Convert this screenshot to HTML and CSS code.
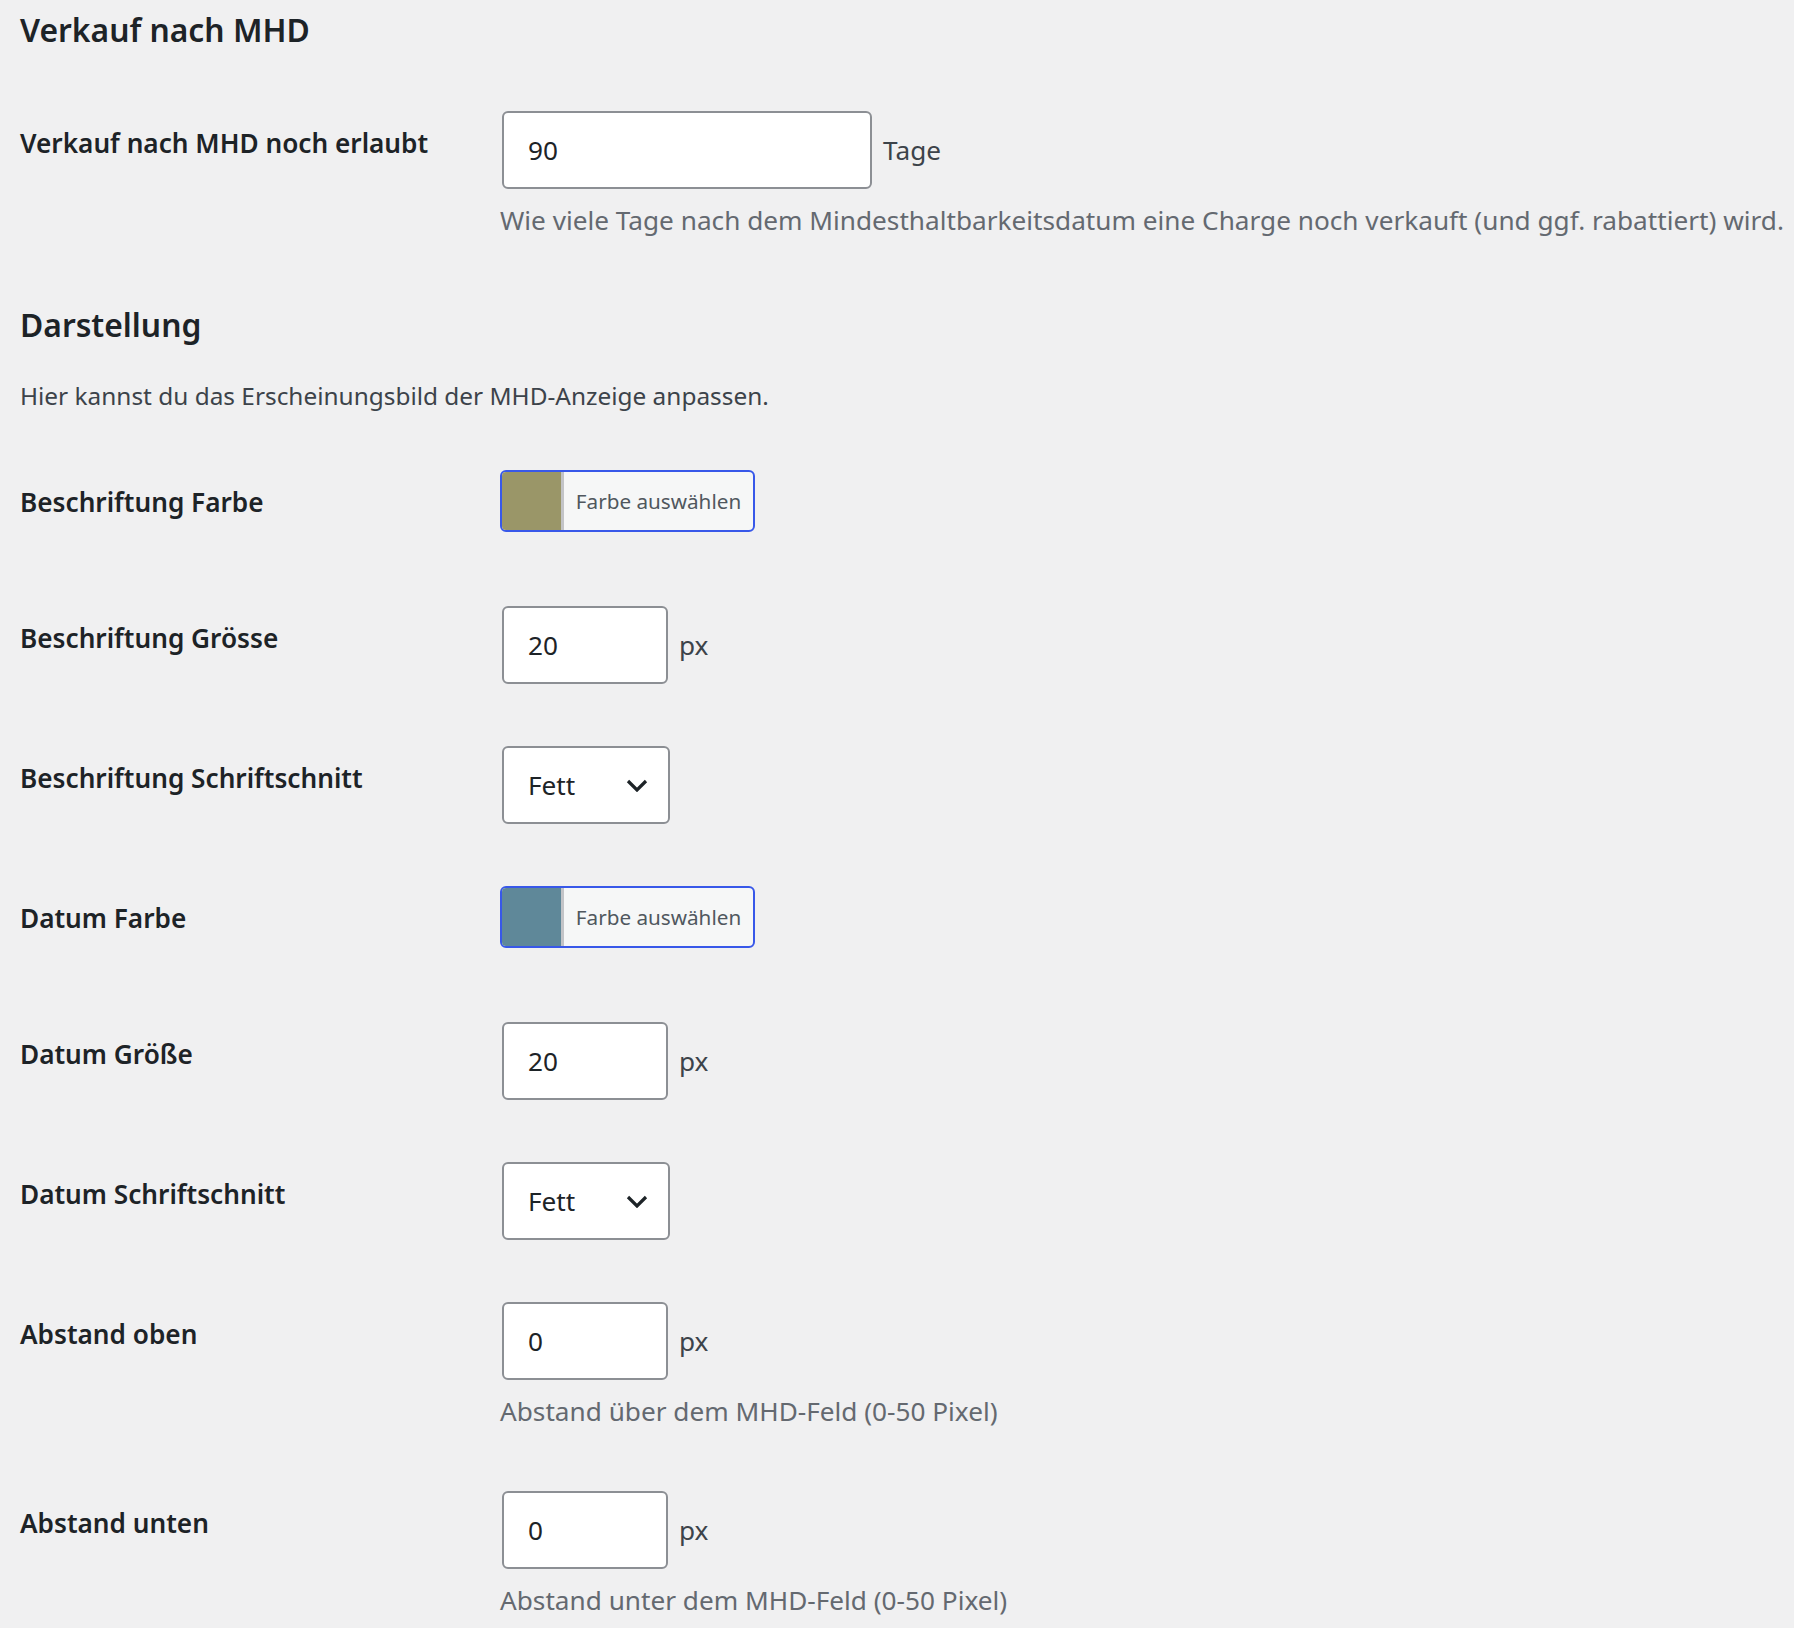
FILE: index.html
```html
<!DOCTYPE html>
<html lang="de">
<head>
    <meta charset="UTF-8">
    <meta name="viewport" content="width=device-width, initial-scale=1.0">
    <title>MHD Einstellungen</title>
    <link rel="stylesheet" href="styles.css">
</head>
<body>
    <div class="wrap">
        <h2>Verkauf nach MHD</h2>

        <div class="form-row">
            <div class="row-label">Verkauf nach MHD noch erlaubt</div>
            <div class="row-field">
                <div class="field-line">
                    <input type="number" class="input-wide" value="90">
                    <span class="unit">Tage</span>
                </div>
                <p class="description">Wie viele Tage nach dem Mindesthaltbarkeitsdatum eine Charge noch verkauft (und ggf. rabattiert) wird.</p>
            </div>
        </div>

        <h2>Darstellung</h2>
        <p class="intro">Hier kannst du das Erscheinungsbild der MHD-Anzeige anpassen.</p>

        <div class="form-row">
            <div class="row-label">Beschriftung Farbe</div>
            <div class="row-field">
                <button type="button" class="color-result">
                    <span class="swatch swatch-olive"></span>
                    <span class="color-text">Farbe auswählen</span>
                </button>
            </div>
        </div>

        <div class="form-row">
            <div class="row-label">Beschriftung Grösse</div>
            <div class="row-field">
                <div class="field-line">
                    <input type="number" class="input-small" value="20">
                    <span class="unit">px</span>
                </div>
            </div>
        </div>

        <div class="form-row">
            <div class="row-label">Beschriftung Schriftschnitt</div>
            <div class="row-field">
                <div class="field-line">
                    <div class="select-wrap">
                        <select>
                            <option>Fett</option>
                            <option>Normal</option>
                        </select>
                        <svg class="chevron" viewBox="0 0 22 13" width="22" height="13"><path d="M2 2l9 9 9-9" fill="none" stroke="#1d2327" stroke-width="3.2"/></svg>
                    </div>
                </div>
            </div>
        </div>

        <div class="form-row">
            <div class="row-label">Datum Farbe</div>
            <div class="row-field">
                <button type="button" class="color-result">
                    <span class="swatch swatch-teal"></span>
                    <span class="color-text">Farbe auswählen</span>
                </button>
            </div>
        </div>

        <div class="form-row">
            <div class="row-label">Datum Größe</div>
            <div class="row-field">
                <div class="field-line">
                    <input type="number" class="input-small" value="20">
                    <span class="unit">px</span>
                </div>
            </div>
        </div>

        <div class="form-row">
            <div class="row-label">Datum Schriftschnitt</div>
            <div class="row-field">
                <div class="field-line">
                    <div class="select-wrap">
                        <select>
                            <option>Fett</option>
                            <option>Normal</option>
                        </select>
                        <svg class="chevron" viewBox="0 0 22 13" width="22" height="13"><path d="M2 2l9 9 9-9" fill="none" stroke="#1d2327" stroke-width="3.2"/></svg>
                    </div>
                </div>
            </div>
        </div>

        <div class="form-row">
            <div class="row-label">Abstand oben</div>
            <div class="row-field">
                <div class="field-line">
                    <input type="number" class="input-small" value="0">
                    <span class="unit">px</span>
                </div>
                <p class="description">Abstand über dem MHD-Feld (0-50 Pixel)</p>
            </div>
        </div>

        <div class="form-row">
            <div class="row-label">Abstand unten</div>
            <div class="row-field">
                <div class="field-line">
                    <input type="number" class="input-small" value="0">
                    <span class="unit">px</span>
                </div>
                <p class="description">Abstand unter dem MHD-Feld (0-50 Pixel)</p>
            </div>
        </div>
    </div>
</body>
</html>
```

FILE: styles.css
```css
* {
    margin: 0;
    padding: 0;
    box-sizing: border-box;
}

body {
    background: #f0f0f1;
    color: #3c434a;
    font-family: 'Noto Sans', 'Open Sans', sans-serif;
    font-size: 24.4px;
}

.wrap {
    padding: 6px 0 0 20px;
}

h2 {
    font-size: 31.8px;
    font-weight: 600;
    line-height: 48px;
    color: #1d2327;
}

.wrap h2 + .form-row {
    margin-top: 27px;
}

.form-row + h2 {
    margin-top: 31px;
}

.intro {
    margin: 27px 0 25px;
    line-height: 39px;
}

.form-row {
    display: flex;
    align-items: flex-start;
}

.row-label {
    width: 482px;
    flex-shrink: 0;
    padding-top: 44px;
    font-size: 26.2px;
    font-weight: 600;
    line-height: 36px;
    color: #1d2327;
}

.row-field {
    padding: 30px 0;
}

.field-line {
    display: flex;
    align-items: center;
    gap: 11px;
    padding-bottom: 2px;
}

input {
    height: 78px;
    border: 2px solid #8c8f94;
    border-radius: 6px;
    background: #fff;
    padding: 0 24px;
    font-family: inherit;
    font-size: 26.2px;
    color: #1d2327;
    -moz-appearance: textfield;
}

input::-webkit-outer-spin-button,
input::-webkit-inner-spin-button {
    -webkit-appearance: none;
}

.input-wide {
    width: 370px;
}

.input-small {
    width: 166px;
}

.unit {
    font-size: 26.2px;
    color: #3c434a;
}

.description {
    margin: 10px 0 0 -2px;
    font-size: 26.2px;
    line-height: 39px;
    color: #646970;
    white-space: nowrap;
}

.select-wrap {
    position: relative;
    width: 168px;
}

.select-wrap select {
    width: 100%;
    height: 78px;
    border: 2px solid #8c8f94;
    border-radius: 6px;
    background: #fff;
    padding: 0 24px;
    font-family: inherit;
    font-size: 26.2px;
    color: #1d2327;
    -webkit-appearance: none;
    appearance: none;
}

.chevron {
    position: absolute;
    right: 22px;
    top: 33px;
    pointer-events: none;
}

.color-result {
    display: flex;
    width: 255px;
    height: 62px;
    margin: 0 0 14px -2px;
    border: 2px solid #3858e9;
    border-radius: 6px;
    background: #f6f7f7;
    overflow: hidden;
    cursor: pointer;
    font-family: inherit;
}

.swatch {
    width: 62px;
    height: 100%;
    border-right: 3px solid #c3c4c7;
}

.swatch-olive {
    background: #9a9668;
}

.swatch-teal {
    background: #5f8899;
}

.color-text {
    flex: 1;
    align-self: center;
    font-size: 20.7px;
    color: #50575e;
    text-align: center;
}
```
